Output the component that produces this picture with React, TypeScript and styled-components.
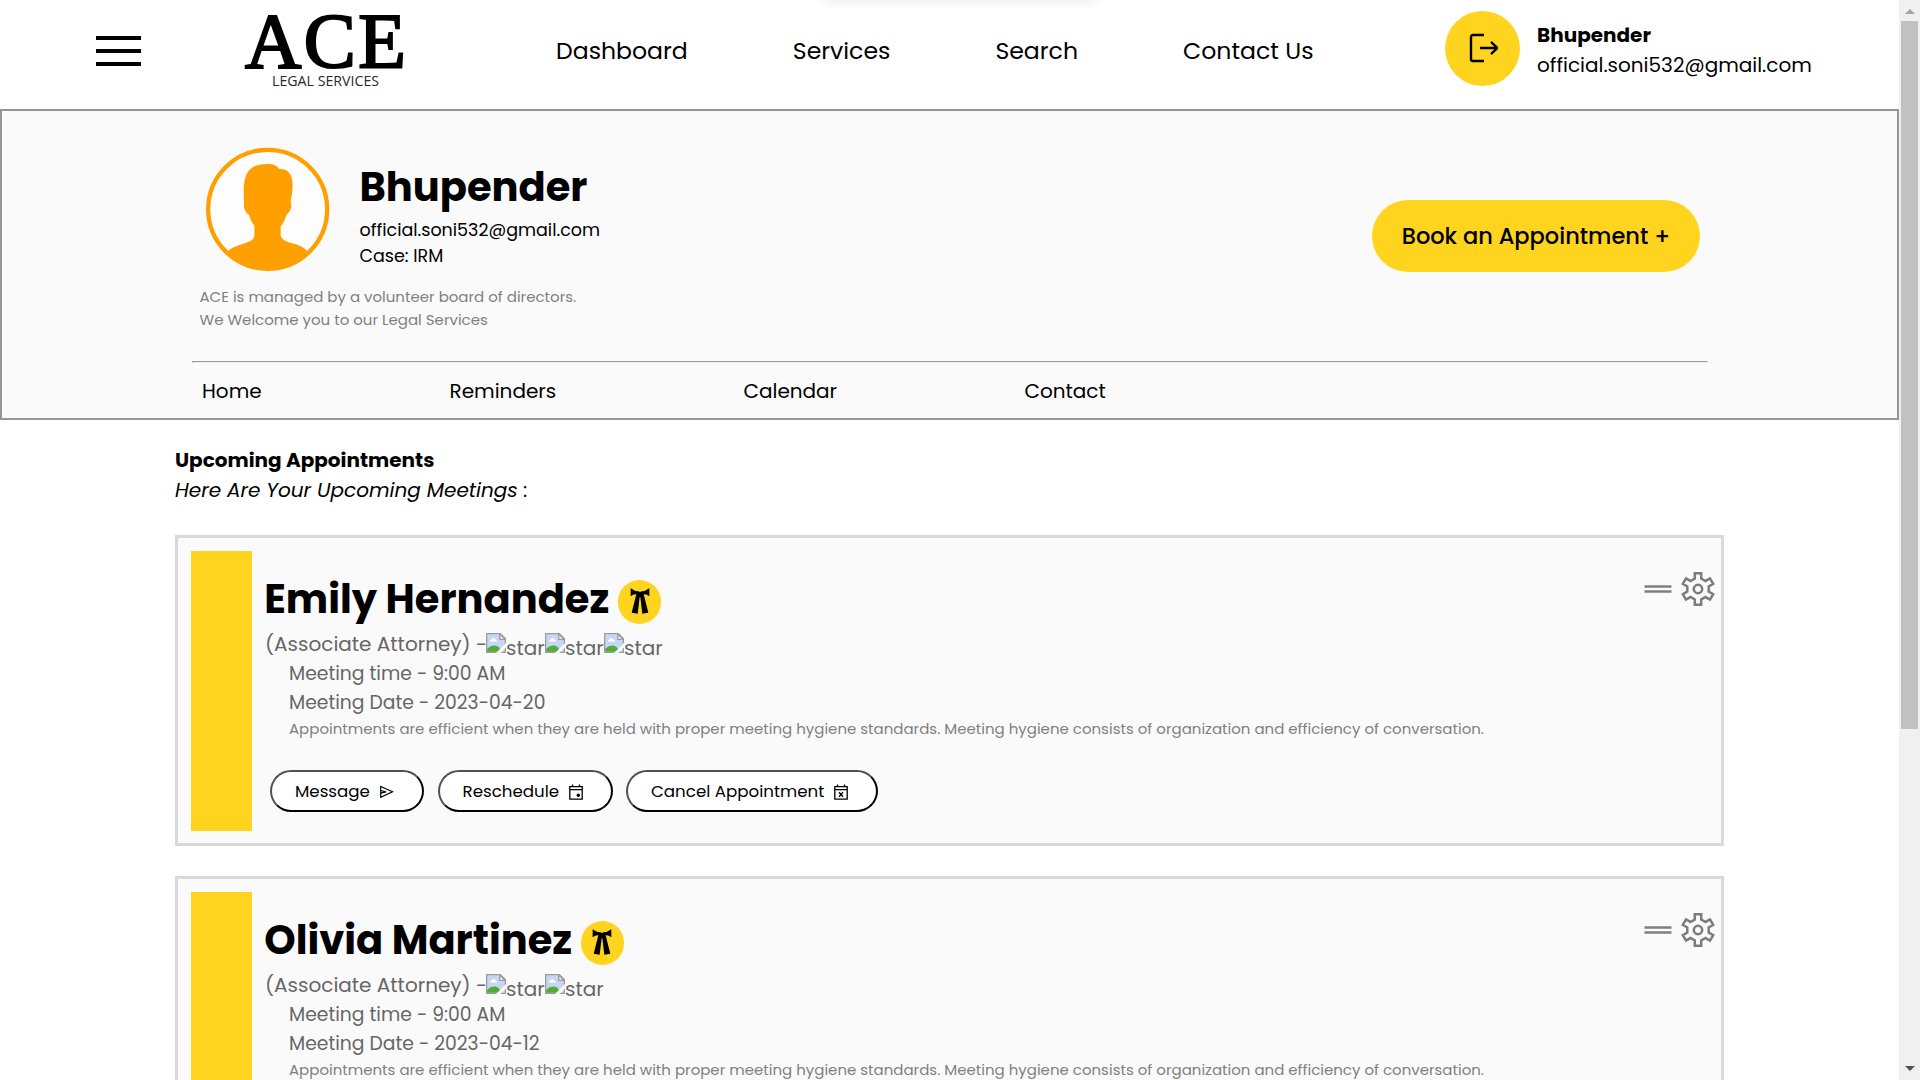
import React from "react";
import styled, { createGlobalStyle } from "styled-components";

const YELLOW = "#ffd41f";

const GlobalStyle = createGlobalStyle`
  * { box-sizing: border-box; }
  body {
    margin: 0;
    overflow: hidden;
    background: #fff;
    color: #000;
    font-family: Poppins, Inter, "Open Sans", sans-serif;
  }
  svg { display: block; flex: none; }
`;

const Window = styled.div`
  display: grid;
  grid-template-columns: 1fr 21px;
  height: 1080px;
  overflow: hidden;
`;

const Page = styled.div`
  height: 1080px;
  overflow: hidden;
`;

const TopShadow = styled.div`
  position: absolute;
  top: -12px;
  left: 824px;
  width: 272px;
  height: 10px;
  box-shadow: 0 0 14px rgba(0, 0, 0, 0.14);
`;

const Text = styled.span<{ $size: number; $line: number; $weight?: number; $color?: string }>`
  display: block;
  white-space: nowrap;
  font-size: ${(p) => p.$size}px;
  line-height: ${(p) => p.$line}px;
  font-weight: ${(p) => p.$weight ?? 400};
  color: ${(p) => p.$color ?? "#000"};
`;

/* Header */

const Header = styled.header`
  display: grid;
  grid-template-columns: 95.5px 148.5px 312px 889px 92px 1fr;
  align-items: start;
  height: 109px;
`;

const Burger = styled.button`
  grid-column: 2;
  display: flex;
  flex-direction: column;
  gap: 9px;
  width: 45px;
  margin-top: 36px;
  padding: 0;
  border: 0;
  background: none;
`;

const BurgerBar = styled.span`
  height: 4px;
  background: #000;
`;

const Logo = styled.div`
  width: 162px;
`;

const LogoName = styled.div`
  padding: 6px 0 0 1px;
  font: 400 78px/70px "Liberation Serif", serif;
  letter-spacing: 2.4px;
  white-space: nowrap;
  -webkit-text-stroke: 2.2px #000;
`;

const LogoTag = styled.div`
  margin-top: -1px;
  padding-left: 28px;
  font: 400 14.2px/12px "Open Sans", sans-serif;
  color: #2a2a2a;
  white-space: nowrap;
`;

const Nav = styled.nav`
  display: flex;
  gap: 105px;
  padding-top: 33px;
`;

const LogoutButton = styled.button`
  display: grid;
  place-items: center;
  width: 75px;
  height: 75px;
  margin-top: 11px;
  padding: 0 0 2px;
  border: 0;
  border-radius: 50%;
  background: ${YELLOW};
`;

const Account = styled.div`
  padding-top: 20px;
`;

/* Profile banner */

const Banner = styled.section`
  height: 311px;
  padding: 35px 189px 0 190px;
  border: 2px solid #969696;
  background: #fafafa;
`;

const BannerTop = styled.div`
  display: flex;
  justify-content: space-between;
  height: 215px;
  padding: 0 8px 0 7.5px;
`;

const Profile = styled.div`
  display: grid;
  grid-template-columns: 160px auto;
  grid-template-rows: 138px auto;
  padding-top: 1px;
`;

const ProfileName = styled(Text)`
  margin: 16px 0 6px;
`;

const Blurb = styled.div`
  grid-column: 1 / -1;
`;

const BookButton = styled.button`
  width: 328px;
  height: 72px;
  margin-top: 54px;
  padding: 0;
  border: 0;
  border-radius: 36px;
  background: ${YELLOW};
  font: inherit;
  text-align: center;
`;

const Rule = styled.hr`
  margin: 0;
  border: 1px solid;
  border-color: #9a9a9a #eee #eee #9a9a9a;
`;

const Tabs = styled.div`
  display: grid;
  grid-template-columns: 247.5px 294px 281px auto;
  padding: 11px 0 0 10px;
`;

/* Appointments */

const Appointments = styled.section`
  padding: 25px 175px 0;
`;

const Subtitle = styled(Text)`
  margin-bottom: 30px;
`;

const Card = styled.article`
  display: grid;
  grid-template-columns: 61px 1fr auto;
  height: 311px;
  margin-bottom: 30px;
  padding: 13px 5px 12px 13px;
  border: 3px solid #d9d9d9;
  background: #fafafa;
`;

const Stripe = styled.div`
  background: ${YELLOW};
`;

const CardBody = styled.div`
  padding: 24px 0 0 13px;
`;

const NameRow = styled.div`
  display: flex;
  gap: 8.5px;
  height: 54px;
`;

const Name = styled(Text)`
  margin: 0 0 0 -0.8px;
`;

const Badge = styled.span`
  display: grid;
  place-items: center;
  width: 43.5px;
  height: 43.5px;
  margin-top: 5px;
  padding-bottom: 1px;
  border-radius: 50%;
  background: ${YELLOW};
`;

const RoleRow = styled.div`
  display: flex;
  height: 30px;
`;

const RoleLabel = styled(Text)`
  width: 221px;
`;

const Star = styled.span`
  display: flex;
  width: 59px;
  padding-top: 4px;
`;

const Details = styled.div`
  padding-left: 24px;
`;

const Actions = styled.div`
  display: flex;
  gap: 13.5px;
  padding: 29px 0 0 5px;
`;

const ActionButton = styled.button<{ $width: number }>`
  display: flex;
  align-items: center;
  justify-content: space-between;
  width: ${(p) => p.$width}px;
  height: 42px;
  padding: 1px 28px 0 23px;
  border: 2px solid;
  border-color: #505050 #000 #000 #505050;
  border-radius: 21px;
  background: #fff;
  font: inherit;
`;

const CardTools = styled.div`
  display: flex;
  align-items: center;
  gap: 8px;
  height: 36px;
  margin-top: 20px;
`;

/* Scroll bar */

const ScrollTrack = styled.aside`
  display: grid;
  grid-template-rows: 21px 708px 1fr 21px;
  justify-items: center;
  background: #f0f0f0;
`;

const ScrollThumb = styled.div`
  width: 17px;
  background: #c1c1c1;
`;

const ScrollArrow = styled.span<{ $down?: boolean }>`
  grid-row: ${(p) => (p.$down ? 4 : 1)};
  align-self: start;
  margin-top: ${(p) => (p.$down ? 7 : 9)}px;
  border: 5px solid transparent;
  border-width: ${(p) => (p.$down ? "5px 5px 0" : "0 5px 5px")};
  border-color: ${(p) => (p.$down ? "#505050 transparent" : "transparent transparent #a3a3a3")};
`;

const LogoutIcon = () => (
  <svg width="30" height="30" viewBox="0 0 30 30" fill="none" stroke="#000" strokeWidth="2.4">
    <path d="M16 2H5Q3 2 3 4V26Q3 28 5 28H16" />
    <path d="M12 15H29.500M23 8.800L29.300 15L23 21.200" />
  </svg>
);

const Avatar = () => (
  <svg width="140" height="124" viewBox="120 111 420 372">
    <circle cx="323" cy="298" r="178.500" fill="#fff" fillOpacity=".5" stroke="#ffa000" strokeWidth="13" />
    <path
      fill="#ffa000"
      d="M252 275C250 230 252 215 257 200C265 175 285 162 322 162C338 162 350 165 358 177C385 176 397 192 398 225C398 245 394 262 392 273C395 285 394 297 388 305C383 312 380 312 378 318C374 332 368 342 362 349V378C368 393 385 397 405 402C425 408 436 417 443 424A163 163 0 0 1 203 424C213 414 230 407 247 402C270 396 282 388 283 378V347C276 338 270 325 267 315C258 308 252 300 252 288Z"
    />
  </svg>
);

const TieIcon = () => (
  <svg width="20" height="26" viewBox="0 0 60 78">
    <path d="M2 1Q14 10 25 10Q30 13 35 10Q46 10 58 1V25Q50 18 41 19L55 74L37 77L31 28H29L23 77L5 74L19 19Q10 18 2 25Z" />
  </svg>
);

const BrokenImage = () => (
  <svg width="20" height="20" viewBox="0 0 16 16">
    <path d="M.5.5H11.500L15.500 4.500V15.500H.5Z" fill="#c6d6f4" stroke="#9b9b9b" />
    <path d="M3 6.800Q3 5.200 4.500 5.200Q5.200 3.500 6.700 4.200Q7.800 4.500 7.800 5.600Q9 5.700 9 6.800Z" fill="#fff" />
    <path d="M1 15V12.500Q4 9.500 7.500 10Q11 10.500 12 15Z" fill="#54ab35" />
    <path d="M11 .8V5H15.300Z" fill="#f4f4f4" stroke="#9b9b9b" />
    <path d="M16 8V11.500L11.500 16H8Z" fill="#fafafa" />
  </svg>
);

const SendIcon = () => (
  <svg width="15" height="14" viewBox="0 0 15 14" fill="none" stroke="#000" strokeWidth="1.200">
    <path d="M1.700 1.500L13.500 6.800L1.700 12.200ZM1.700 5.500L7 6.800L1.700 8.200" />
  </svg>
);

const CalendarIcon = ({ cancel }: { cancel?: boolean }) => (
  <svg width="14" height="16" viewBox="0 0 14 16" fill="none" stroke="#000" strokeWidth="1.300">
    <path d="M.8 2.700H13.200V15.200H.8ZM.8 5.700H13.200M3.500 .5V2.700M10.500 .5V2.700" />
    {cancel ? <path d="M5 8.200L9 12.800M9 8.200L5 12.800" /> : <circle cx="9.300" cy="11.300" r="1.700" fill="#000" stroke="none" />}
  </svg>
);

const DragIcon = () => (
  <svg width="28" height="10" viewBox="0 0 28 10" stroke="#808080" strokeWidth="2.700">
    <path d="M.5 2.500H27.500M.5 7.500H27.500" />
  </svg>
);

const gearPoints = [0, 60, 120, 180, 240, 300]
  .flatMap((tooth) =>
    [[-17, 11], [-11.5, 16], [11.5, 16], [17, 11]].map(([offset, radius]) => {
      const angle = ((tooth + offset - 90) * Math.PI) / 180;
      return `${(18 + radius * Math.cos(angle)).toFixed(2)},${(18 + radius * Math.sin(angle)).toFixed(2)}`;
    })
  )
  .join(" ");

const GearIcon = () => (
  <svg width="36" height="36" viewBox="0 0 36 36" fill="none" stroke="#7c7c7c" strokeWidth="2.500">
    <polygon points={gearPoints} />
    <circle cx="18" cy="18" r="4.200" />
  </svg>
);

type Appointment = { name: string; stars: number; date: string };

const appointments: Appointment[] = [
  { name: "Emily Hernandez", stars: 3, date: "2023-04-20" },
  { name: "Olivia Martinez", stars: 2, date: "2023-04-12" },
];

const AppointmentCard = ({ item }: { item: Appointment }) => (
  <Card>
    <Stripe />
    <CardBody>
      <NameRow>
        <Name as="h2" $size={40} $line={48} $weight={700}>{item.name}</Name>
        <Badge><TieIcon /></Badge>
      </NameRow>
      <RoleRow>
        <RoleLabel $size={20} $line={30} $color="#666">(Associate Attorney) -</RoleLabel>
        {Array.from({ length: item.stars }, (_, i) => (
          <Star key={i}>
            <BrokenImage />
            <Text $size={20} $line={30} $color="#666">star</Text>
          </Star>
        ))}
      </RoleRow>
      <Details>
        <Text $size={18.75} $line={29} $color="#666">Meeting time - 9:00 AM</Text>
        <Text $size={18.75} $line={29} $color="#666">Meeting Date - {item.date}</Text>
        <Text $size={15} $line={24} $color="#808080">
          Appointments are efficient when they are held with proper meeting hygiene standards. Meeting hygiene consists of organization and efficiency of conversation.
        </Text>
      </Details>
      <Actions>
        <ActionButton $width={154}><Text $size={16.667} $line={24}>Message</Text><SendIcon /></ActionButton>
        <ActionButton $width={175}><Text $size={16.667} $line={24}>Reschedule</Text><CalendarIcon /></ActionButton>
        <ActionButton $width={252}><Text $size={16.667} $line={24}>Cancel Appointment</Text><CalendarIcon cancel /></ActionButton>
      </Actions>
    </CardBody>
    <CardTools><DragIcon /><GearIcon /></CardTools>
  </Card>
);

export default function App() {
  return (
    <>
      <GlobalStyle />
      <Window>
        <Page>
          <TopShadow />
          <Header>
            <Burger><BurgerBar /><BurgerBar /><BurgerBar /></Burger>
            <Logo>
              <LogoName>ACE</LogoName>
              <LogoTag>LEGAL SERVICES</LogoTag>
            </Logo>
            <Nav>
              <Text $size={23.6} $line={36}>Dashboard</Text>
              <Text $size={23.6} $line={36}>Services</Text>
              <Text $size={23.6} $line={36}>Search</Text>
              <Text $size={23.6} $line={36}>Contact Us</Text>
            </Nav>
            <LogoutButton><LogoutIcon /></LogoutButton>
            <Account>
              <Text $size={20} $line={30} $weight={700}>Bhupender</Text>
              <Text $size={20} $line={30}>official.soni532@gmail.com</Text>
            </Account>
          </Header>
          <Banner>
            <BannerTop>
              <Profile>
                <Avatar />
                <div>
                  <ProfileName $size={40} $line={48} $weight={700}>Bhupender</ProfileName>
                  <Text $size={17.5} $line={26}>official.soni532@gmail.com</Text>
                  <Text $size={17.5} $line={26}>Case: IRM</Text>
                </div>
                <Blurb>
                  <Text $size={15} $line={23} $color="#808080">ACE is managed by a volunteer board of directors.</Text>
                  <Text $size={15} $line={23} $color="#808080">We Welcome you to our Legal Services</Text>
                </Blurb>
              </Profile>
              <BookButton>
                <Text $size={22.5} $line={36} $weight={500}>Book an Appointment +</Text>
              </BookButton>
            </BannerTop>
            <Rule />
            <Tabs>
              <Text $size={20} $line={34}>Home</Text>
              <Text $size={20} $line={34}>Reminders</Text>
              <Text $size={20} $line={34}>Calendar</Text>
              <Text $size={20} $line={34}>Contact</Text>
            </Tabs>
          </Banner>
          <Appointments>
            <Text $size={20} $line={30} $weight={700}>Upcoming Appointments</Text>
            <Subtitle $size={20} $line={30}><em>Here Are Your Upcoming Meetings</em> :</Subtitle>
            {appointments.map((item) => (
              <AppointmentCard key={item.name} item={item} />
            ))}
          </Appointments>
        </Page>
        <ScrollTrack>
          <ScrollArrow />
          <ScrollThumb />
          <ScrollArrow $down />
        </ScrollTrack>
      </Window>
    </>
  );
}
